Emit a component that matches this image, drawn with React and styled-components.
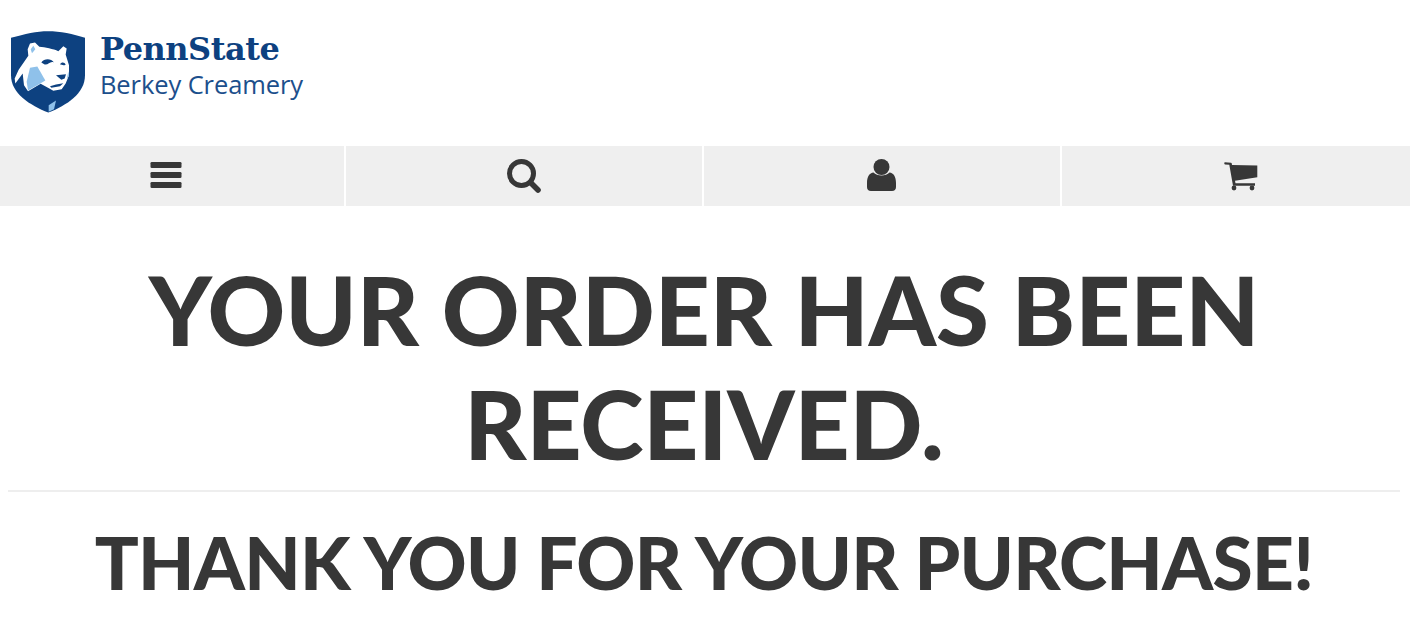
import React from 'react';
import styled, { createGlobalStyle } from 'styled-components';

const Global = createGlobalStyle`
  body {
    margin: 0;
    background: #fff;
    font-family: "Lato", "Liberation Sans", sans-serif;
    color: #373737;
  }
`

const Header = styled.header`
  height: 146px;
  box-sizing: border-box;
  padding: 31px 0 0 11px;
  display: flex;
  align-items: flex-start;
  gap: 15px;
`

const Wordmark = styled.div`
  display: flex;
  flex-direction: column;
`

const Penn = styled.div`
  font-family: "DejaVu Serif", serif;
  font-weight: 700;
  font-size: 32px;
  line-height: 37px;
  letter-spacing: -0.5px;
  color: #0d4180;
`

const Unit = styled.div`
  font-family: "Open Sans", sans-serif;
  font-size: 25.5px;
  line-height: 33px;
  letter-spacing: -0.1px;
  color: #1c4f8c;
`

const Nav = styled.nav`
  display: grid;
  grid-template-columns: 344px 356px 356px 348px;
  column-gap: 2px;
`

const NavItem = styled.a`
  height: 60px;
  box-sizing: border-box;
  background: #efefef;
  display: flex;
  align-items: center;
  justify-content: center;
  padding: ${p => p.$pad || '0'};
  color: #373737;
`

const Main = styled.main`
  margin: 0 10px 0 8px;
  text-align: center;
`

const Title = styled.h1`
  margin: 0;
  padding-top: 46px;
  font-size: 96px;
  line-height: 114px;
  font-weight: 900;
  letter-spacing: -0.1px;
  text-transform: uppercase;
`

const Rule = styled.hr`
  border: 0;
  height: 2px;
  background: #eee;
  margin: 10px 0 0;
`

const Thanks = styled.h2`
  margin: 0;
  padding-top: 25px;
  font-size: 73px;
  line-height: 90px;
  font-weight: 900;
  letter-spacing: -0.75px;
  text-transform: uppercase;
`

const Shield = () => (
  <svg width="74" height="82" viewBox="33 18 222 245">
    <path d="M33 38 C75 26 110 18 144 18 C180 18 220 26 255 38 L255 150 C255 205 200 240 145 262 C90 240 33 205 33 150 Z" fill="#0d4180" />
    <path d="M83 72 L90 55 L105 52 L118 65 C135 66 160 72 175 78 L190 63 L200 70 L197 88 L207 120 L207 150 L197 175 L185 192 L160 197 L148 190 L122 176 L84 198 L72 180 L68 145 L46 175 L44 160 L56 134 L85 92 Z" fill="#fff" />
    <path d="M90 128 L112 124 L136 166 L112 180 L84 196 L80 170 Z" fill="#8fc1ea" />
    <path d="M205 138 L207 150 L200 164 Z" fill="#8fc1ea" />
    <path d="M92 72 L100 62 L106 72 L96 84 Z" fill="#8fc1ea" />
    <path d="M146 240 L168 226 L162 252 L146 260 Z" fill="#8fc1ea" />
    <path d="M124 112 C132 100 152 98 162 112 C150 106 146 120 134 118 Z" fill="#0d4180" />
    <path d="M180 118 C184 110 194 110 197 119 C192 123 186 116 180 118 Z" fill="#0d4180" />
    <path d="M168 150 L198 147 L194 160 L184 164 Z" fill="#0d4180" />
    <path d="M150 183 L168 178 L190 174 L180 183 L154 188 Z" fill="#0d4180" />
  </svg>
)

const Bars = () => (
  <svg width="32" height="26" viewBox="0 0 32 26" fill="currentColor">
    <rect x="0.5" width="31" height="6" rx="1.3" />
    <rect x="0.5" y="10" width="31" height="6" rx="1.3" />
    <rect x="0.5" y="20" width="31" height="6" rx="1.3" />
  </svg>
)

const Search = () => (
  <svg width="34" height="34" viewBox="0 0 34 34" fill="none" stroke="currentColor">
    <circle cx="14.5" cy="14.5" r="12" strokeWidth="5" />
    <path d="M23.5 23.5 L31 31" strokeWidth="5.6" strokeLinecap="round" />
  </svg>
)

const User = () => (
  <svg width="29" height="32" viewBox="0 0 29 32" fill="currentColor">
    <circle cx="14.5" cy="8" r="8" />
    <path d="M6.5 13.5 C10 17.5 19 17.5 22.5 13.5 C26.5 14 29 17.5 29 24 L29 28 C29 30.5 27.5 32 25 32 L4 32 C1.5 32 0 30.5 0 28 L0 24 C0 17.5 2.5 14 6.5 13.5 Z" />
  </svg>
)

const Cart = () => (
  <svg width="34" height="29" viewBox="0 0 34 29" fill="currentColor">
    <path d="M1 0.3 L7 0.8 C7.6 0.9 7.9 1.4 8 3 L33.3 3.4 L33.3 15.3 L11 18.7 L11.5 21.3 L31 21.3 L31 23.7 L9 23.7 L5.3 2.8 L1 2.4 C0 2.2 0 0.3 1 0.3 Z" />
    <circle cx="10" cy="26" r="2.4" />
    <circle cx="28" cy="26" r="2.4" />
  </svg>
)

export default function App() {
  return (
    <>
      <Global />
      <Header>
        <Shield />
        <Wordmark>
          <Penn>PennState</Penn>
          <Unit>Berkey Creamery</Unit>
        </Wordmark>
      </Header>
      <Nav>
        <NavItem $pad="0 13px 2px 0"><Bars /></NavItem>
        <NavItem><Search /></NavItem>
        <NavItem $pad="0 1px 2px 0"><User /></NavItem>
        <NavItem $pad="0 0 0 10px"><Cart /></NavItem>
      </Nav>
      <Main>
        <Title>Your order has been received.</Title>
        <Rule />
        <Thanks>Thank you for your purchase!</Thanks>
      </Main>
    </>
  );
}
